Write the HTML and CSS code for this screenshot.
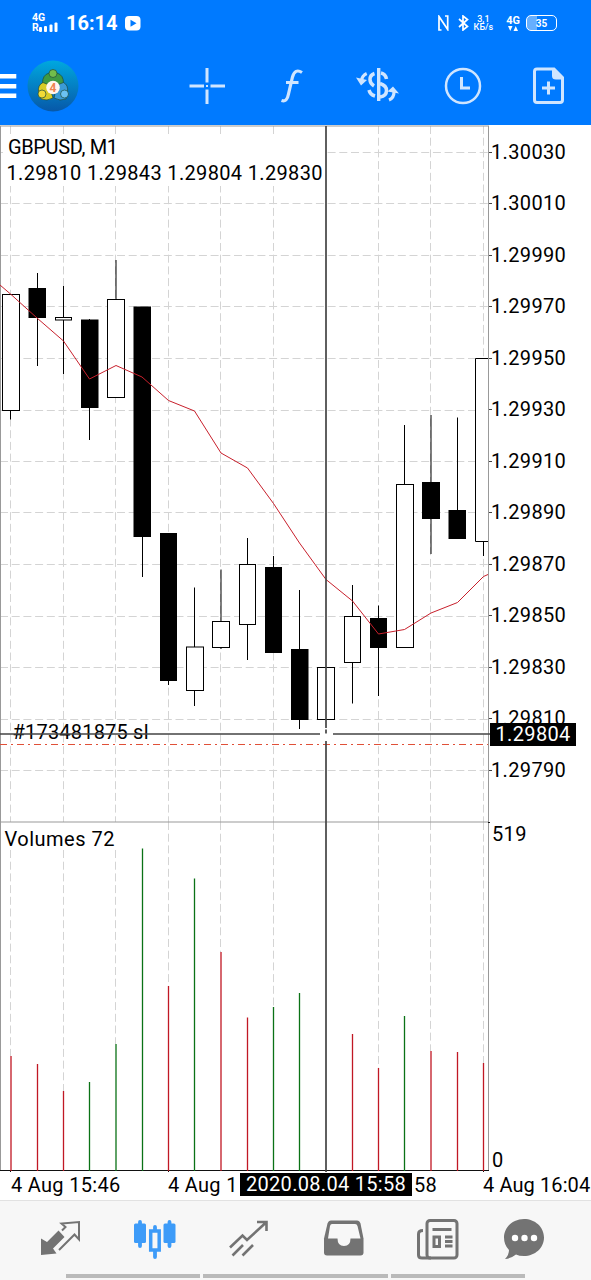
FILE: index.html
```html
<!DOCTYPE html>
<html lang="en">
  <head>
    <meta charset="UTF-8" />
    <meta name="viewport" content="width=device-width, initial-scale=1.0" />
    <title>GBPUSD, M1</title>
    <link rel="stylesheet" href="styles.css">
  </head>
  <body>
    <header>
      <div class="statusbar">
        <div class="network">
          <span>4G</span>
          <div class="roaming">
            <span>R</span>
            <svg width="20" height="10" viewBox="0 0 20 10" fill="#fff">
              <rect x="0" y="5" width="3" height="5" rx="1" />
              <rect x="5" y="4" width="3" height="6" rx="1" />
              <rect x="10.500" y="2.500" width="3" height="7.500" rx="1" />
              <rect x="15.500" y="0.500" width="3" height="9.500" rx="1" />
            </svg>
          </div>
        </div>
        <span class="clock">16:14</span>
        <svg class="play" width="16" height="15" viewBox="0 0 16 15">
          <rect width="15.500" height="14.500" rx="4" fill="#fff" />
          <path d="M5.500 3.800v7l6-3.500z" fill="#007aff" />
        </svg>
        <div class="status-right">
          <svg class="nfc" width="11" height="16" viewBox="0 0 11 16" fill="none" stroke="#fff" stroke-width="1.700">
            <path d="M3.500 15H1V1.500L9.700 14.500V1H7" />
          </svg>
          <svg class="bluetooth" width="11" height="16" viewBox="0 0 11 16" fill="none" stroke="#fff" stroke-width="1.700">
            <path d="M1 4l8.500 7.500-4.500 3.500V1l4.500 3.500L1 12" />
          </svg>
          <div class="speed"><span>3,1</span><span>КБ/s</span></div>
          <div class="data">
            <span>4G</span>
            <svg width="10" height="5" viewBox="0 0 10 5" fill="#fff"><path d="M0 0h4.500L2.250 5zM5.500 5H10L7.750 0z" /></svg>
          </div>
          <div class="battery"><span>35</span></div>
        </div>
      </div>

      <nav class="toolbar">
        <svg class="menu" width="17" height="26" viewBox="0 0 17 26" fill="#fff">
          <path d="M0 1h16.300v4.600H0zM0 11h16.300v4.600H0zM0 20.500h16.300v4.600H0z" />
        </svg>
        <svg class="logo" width="52" height="52" viewBox="0 0 52 52">
          <defs>
            <linearGradient id="disc" x1="0" y1="0" x2="0" y2="1">
              <stop offset="0" stop-color="#00a8df" />
              <stop offset="1" stop-color="#0758a8" />
            </linearGradient>
          </defs>
          <circle cx="26" cy="26" r="25.500" fill="url(#disc)" />
          <g stroke="#1d4a3c" stroke-width="0.700">
            <path d="M15.500 23q0-8 6.500-10h8q6.500 2 6.500 10l-5 4H21z" fill="#3f9a43" />
            <circle cx="26" cy="13.500" r="4" fill="#72bd4b" />
            <path d="M11.500 32q-1-7 4.500-9.500l6 2.500 4 13q-6 3.500-12 1z" fill="#d9cc27" />
            <circle cx="15" cy="34" r="4" fill="#f2db36" />
            <path d="M40.500 32q1-7-4-9.500L30 25l-3 13q6 3.500 12 1z" fill="#3b9bd6" />
            <circle cx="37.500" cy="34" r="4" fill="#6cc2f2" />
          </g>
          <circle cx="26" cy="27.500" r="6.800" fill="#fff6ee" />
          <text x="26" y="32" class="logo-digit">4</text>
        </svg>
        <svg class="tool cross" width="36" height="38" viewBox="0 0 36 38">
          <path d="M18 1v14.500M18 22.500v14.500M.500 19h14.500M21.500 19H36" stroke-width="3" />
          <path d="M17 18h2v2h-2z" fill="#cfe5ff" stroke="none" />
        </svg>
        <svg class="tool func" width="24" height="36" viewBox="0 0 24 36">
          <path d="M22 4.500Q15 0 12.500 9L8.500 26Q7 34.500 1.500 32.500M6 14.500h12.500" stroke-width="3.200" />
        </svg>
        <svg class="tool trade" width="44" height="36" viewBox="0 0 44 36">
          <path d="M22.700 0v33" stroke-width="3.400" />
          <path d="M18.500 5.500Q14 7 14 11.500q0 4 4 6.500M13 22q1 4.500 6 6M25 5q4.500 1 5.500 6M24 15.500q6.500 2 6.500 7 0 5.500-6.500 6.500" stroke-width="3.500" />
          <path d="M10.700 5.500Q6 7.500 5.500 13M33 32Q38 30 38 24" stroke-width="3.200" />
          <path d="M0 9.500l11 2.500-6 5.500zM31.500 23.500l5.500-5 6 7z" fill="#cfe5ff" stroke="none" />
        </svg>
        <svg class="tool history" width="38" height="38" viewBox="0 0 38 38">
          <circle cx="19" cy="19" r="17" stroke-width="2.500" />
          <path d="M17.500 10v11H26" stroke-width="3" />
        </svg>
        <svg class="tool order" width="32" height="38" viewBox="0 0 32 38">
          <path d="M4 2h17l8.500 8.500V33q0 2.500-2.500 2.500H4Q1.500 35.500 1.500 33V4.500Q1.500 2 4 2z" stroke-width="3" />
          <path d="M19 2v7q0 3.500 4 3.500h7L22 2z" fill="#cfe5ff" stroke="none" />
          <path d="M15.500 14.500v13M9 21h13" stroke-width="3" />
        </svg>
      </nav>
    </header>

    <main>
      <div class="chart">
        <svg class="plot" width="490" height="1047" viewBox="0 125 490 1047">
          <!-- grid -->
          <path class="grid" d="M0 152.500h488M0 203.500h488M0 255.500h488M0 306.500h488M0 358.500h488M0 410.500h488M0 461.500h488M0 512.500h488M0 564.500h488M0 616.500h488M0 667.500h488M0 719.500h488M0 770.500h488" />
          <path class="grid" d="M10.500 126v696M63.500 126v696M115.500 126v696M168.500 126v696M220.500 126v696M273.500 126v696M378.500 126v696M430.500 126v696M483.500 126v696" />
          <path class="grid" d="M10.500 850v206M63.500 850v241M115.500 850v194M168.500 822v164M220.500 822v130M273.500 822v185M378.500 822v246M430.500 822v229M483.500 822v241" />
          <path class="frame" d="M.500 126v1045M488.500 126v1045M0 126h489M0 822h489" />
          <path class="axis" d="M0 1170.500h489M488 822.500h3M10.500 1171v1M168.500 1171v1M483.500 1171v1" />

          <rect x="3" y="136" width="322" height="50" fill="#fff" />
          <text x="8" y="154" textLength="110">GBPUSD, M1</text>
          <text x="6.500" y="180" textLength="316">1.29810 1.29843 1.29804 1.29830</text>
          <text x="4.500" y="846" textLength="110">Volumes 72</text>

          <!-- wicks -->
          <path class="wick" d="M10.500 410v9.500M37.500 273v93M63.500 286v88M89.500 319v121M116 260v39M142.500 537v40M168.500 681v4M194.500 587.500V706M221 569.500V649M247.500 538v122M273.500 556v97M299.500 590v139M352.500 585v118.500M378.500 605.500V696M404.500 425v60M431 415v139M457.500 417.500V539M483.500 541v15" />
          <!-- bull candles -->
          <g class="bull">
            <rect x="2.500" y="294.500" width="17" height="116" />
            <rect x="55.500" y="317.500" width="16" height="2.500" />
            <rect x="107.500" y="299.500" width="17" height="98" />
            <rect x="186.500" y="647" width="17" height="43.500" />
            <rect x="212.500" y="621.500" width="17" height="26" />
            <rect x="239.500" y="564.500" width="16" height="60" />
            <rect x="317.500" y="667.500" width="17" height="52" />
            <rect x="344.500" y="616.500" width="16" height="46" />
            <rect x="396.500" y="484.500" width="17" height="163" />
            <path d="M488 358.500h-12.500v183H488" />
          </g>
          <!-- bear candles -->
          <g class="bear">
            <rect x="28.500" y="288" width="17.500" height="30" />
            <rect x="81" y="319.500" width="17.500" height="88.500" />
            <rect x="133.500" y="306.500" width="17.500" height="230.500" />
            <rect x="160" y="533" width="17" height="148" />
            <rect x="265" y="567" width="17" height="86" />
            <rect x="291" y="649" width="17.500" height="71" />
            <rect x="370" y="618" width="17" height="30" />
            <rect x="422" y="482" width="18" height="37" />
            <rect x="448.500" y="510" width="17.500" height="29" />
          </g>

          <polyline class="ma" points="0,285 10.500,294 37,318 63.500,341 89.500,379 116,365.500 142,377 168.500,400.500 194.500,411 221,453 247.500,468 273.500,503.500 299.500,543 326,579.500 352.500,601 378.500,634 404.500,629.500 431,613 457.500,602.500 483.500,576.500 488,574.500" />

          <!-- volumes -->
          <path class="vol-down" d="M11 1056v115M37.500 1064v107M63.500 1091v80M168.500 986v185M221 952v219M247.500 1017.500V1171M352.500 1034v137M378.500 1068v103M431 1051v120M457.500 1052v119M483.500 1063v108" />
          <path class="vol-up" d="M89.500 1082v89M116 1044v127M142.500 848.500V1171M194.500 878.500V1171M273.500 1007v164M299.500 993v178M404.500 1016v155" />

          <text x="12.500" y="738.500" textLength="136">#173481875 sl</text>
          <path class="stop" d="M0 744.500h488" />
          <path class="cursor" d="M326 126v602M326 729.500v4M326 741v431M0 734h320M333 734h157" />
        </svg>

        <div class="prices">
          <div class="price">1.30030</div>
          <div class="price">1.30010</div>
          <div class="price">1.29990</div>
          <div class="price">1.29970</div>
          <div class="price">1.29950</div>
          <div class="price">1.29930</div>
          <div class="price">1.29910</div>
          <div class="price">1.29890</div>
          <div class="price">1.29870</div>
          <div class="price">1.29850</div>
          <div class="price">1.29830</div>
          <div class="price">1.29810</div>
          <div class="price">1.29790</div>
          <div class="current">1.29804</div>
          <div class="vol-max">519</div>
          <div class="vol-min">0</div>
        </div>
      </div>

      <div class="times">
        <span class="time">4 Aug 15:46</span>
        <span class="time cut">4 Aug 1</span>
        <span class="picked">2020.08.04 15:58</span>
        <span class="rest">58</span>
        <span class="time last">4 Aug 16:04</span>
      </div>
    </main>

    <footer>
      <div class="tabs">
        <svg width="42" height="42" viewBox="0 0 42 42">
          <path d="M2 19.500l6 3.500L19.500 11.500 25.500 18 14 29.500l3.500 5L2 36z" fill="#737373" />
          <path d="M23 11.500l3.500-3.500-4-3.500L40 3v17.500l-4.500-5L20 31" fill="none" stroke="#737373" stroke-width="2" />
        </svg>
        <svg class="active" width="42" height="42" viewBox="0 0 42 42">
          <path d="M6 3v24M21 8v30M35.500 3v24" stroke="#3d9bf8" stroke-width="3.800" stroke-linecap="round" />
          <rect x="0" y="4.500" width="12" height="19.500" rx="1.500" fill="#3d9bf8" />
          <rect x="29.500" y="4.500" width="12" height="19.500" rx="1.500" fill="#3d9bf8" />
          <rect x="16.700" y="12" width="8.500" height="19" fill="#f7f7f7" stroke="#3d9bf8" stroke-width="3.500" />
        </svg>
        <svg width="42" height="42" viewBox="0 0 42 42" fill="none" stroke="#737373" stroke-width="2.600">
          <path d="M2 28.500L14.500 16.500 19 21 38 3.500M29 3h9.500v9M4.500 36.500L15 26M14.500 36.500L25 26" />
        </svg>
        <svg width="42" height="42" viewBox="0 0 42 42">
          <path d="M8 1.500h26q2.500 0 3.500 3l3 15v14q0 3-3 3H4q-3 0-3-3v-14L4.500 4.500q1-3 3.500-3z" fill="#737373" />
          <path d="M9 5h23q2 0 2.500 2L37.500 19.500H27.500q0 7.500-6.500 7.500t-6.500-7.500H5L7 7q.500-2 2-2z" fill="#f7f7f7" />
        </svg>
        <svg width="42" height="42" viewBox="0 0 42 42" fill="none" stroke="#737373" stroke-width="3">
          <rect x="10" y="1.500" width="30" height="37.500" rx="3" />
          <path d="M6 11.500Q1.500 11.500 1.500 15V36q0 3 3.500 3h9" />
          <path d="M15.500 10.500h19M28 18h7.500M28 22.500h7.500M28 27h7.500" />
          <rect x="17" y="18" width="5.500" height="9.500" />
        </svg>
        <svg class="chat" width="42" height="42" viewBox="0 0 42 42">
          <path d="M21 0C32 0 41 8 41 18.500S32 37 21 37q-5 0-8-1.500-5 4-11 4.500 4-4 4-9Q1 26 1 18.500C1 8 10 0 21 0z" fill="#737373" />
          <circle cx="12" cy="19" r="3.200" fill="#fff" />
          <circle cx="21.500" cy="19" r="3.200" fill="#fff" />
          <circle cx="31" cy="19" r="3.200" fill="#fff" />
        </svg>
      </div>
      <div class="gestures"><i></i><i class="middle"></i><i></i></div>
    </footer>
  </body>
</html>
```

FILE: styles.css
```css
* {
  box-sizing: border-box;
}

body {
  margin: 0;
  width: 591px;
  height: 1280px;
  overflow: hidden;
  font-family: Roboto, sans-serif;
  background-color: #fff;
  color: #000;
}

svg {
  display: block;
  flex: none;
}

header {
  height: 125px;
  background-color: #007aff;
  color: #fff;
}

.statusbar {
  display: flex;
  align-items: center;
  height: 46px;
  padding: 0 34px 0 32px;
}

.network {
  width: 27px;
  font-size: 10.5px;
  font-weight: 700;
  line-height: 8px;
}

.roaming {
  display: flex;
  align-items: flex-end;
}

.clock {
  margin-left: 7px;
  font-size: 20px;
  font-weight: 700;
}

.play {
  margin-left: 7px;
}

.status-right {
  display: flex;
  align-items: center;
  margin-left: auto;
}

.bluetooth {
  margin-left: 9px;
}

.speed,
.data {
  display: flex;
  flex-direction: column;
  align-items: center;
}

.speed {
  margin-left: 5px;
  font-size: 9px;
  font-weight: 500;
  line-height: 8.5px;
}

.data {
  margin-left: 13px;
  font-size: 11px;
  font-weight: 700;
  line-height: 11px;
}

.battery {
  display: flex;
  align-items: center;
  justify-content: center;
  width: 31px;
  height: 16px;
  margin-left: 6px;
  border: 1.5px solid #fff;
  border-radius: 5px;
  background: linear-gradient(90deg, #66afff 10px, transparent 10px);
  font-size: 10px;
  font-weight: 700;
}

.toolbar {
  display: flex;
  align-items: center;
  height: 79px;
}

.logo {
  margin-left: 10px;
}

.logo-digit {
  font-size: 12px;
  font-weight: 700;
  fill: #ef8250;
  text-anchor: middle;
}

.tool {
  fill: none;
  stroke: #cfe5ff;
}

.cross {
  margin-left: 110px;
}

.func {
  margin-left: 55px;
}

.trade {
  margin-left: 52px;
}

.history {
  margin-left: 44px;
}

.order {
  margin-left: 51px;
}

.chart {
  display: flex;
  height: 1047px;
}

.plot text {
  font-size: 20px;
}

.grid {
  stroke: #d4d4d4;
  stroke-dasharray: 8 3.7;
}

.frame {
  stroke: #999;
}

.axis {
  stroke: #111;
}

.wick {
  stroke: #000;
}

.bull {
  fill: #fff;
  stroke: #000;
}

.ma {
  fill: none;
  stroke: #c8202c;
}

.vol-down {
  stroke: #c01824;
  stroke-width: 1.3;
}

.vol-up {
  stroke: #0b7216;
  stroke-width: 1.3;
}

.stop {
  stroke: #e05038;
  stroke-dasharray: 7 4 2 4;
}

.cursor {
  stroke: #444;
  stroke-width: 1.7;
}

.prices {
  position: relative;
  width: 101px;
  padding-top: 1px;
  font-size: 20px;
  letter-spacing: 0.35px;
}

.price {
  display: flex;
  align-items: center;
  height: 51.5px;
}

.price::before {
  content: "";
  width: 3px;
  height: 1px;
  margin-right: -1px;
  margin-left: -1px;
  margin-top: 1px;
  background-color: #444;
}

/* price under the crosshair, over the scale */
.current {
  position: absolute;
  top: 598px;
  left: 0;
  width: 86px;
  padding-left: 5.5px;
  background-color: #000;
  color: #fff;
  line-height: 23px;
}

.vol-max {
  padding: 26px 0 0 2px;
}

.vol-min {
  padding: 302px 0 0 2px;
}

.times {
  display: flex;
  align-items: center;
  height: 28px;
  padding-left: 11px;
  padding-bottom: 3px;
  font-size: 20px;
  letter-spacing: 0.3px;
  white-space: nowrap;
}

.time {
  width: 157px;
}

.time.cut {
  width: 72px;
}

.picked {
  width: 172px;
  padding-left: 6px;
  background-color: #000;
  color: #fff;
  line-height: 23px;
}

.rest {
  width: 71px;
  padding-left: 2px;
}

.time.last {
  width: 108px;
  letter-spacing: 0.1px;
}

footer {
  height: 80px;
  border-top: 1px solid #e2e2e2;
  background-color: #f7f7f7;
}

.tabs {
  display: flex;
  gap: 52.5px;
  height: 73px;
  padding: 18px 0 0 39px;
}

.tabs .chat {
  margin-left: -8.5px;
}

.gestures {
  display: flex;
  gap: 3px;
  padding-left: 66px;
}

.gestures i {
  width: 134px;
  height: 4px;
  background-color: #bababa;
}

.gestures .middle {
  width: 185px;
}
```
